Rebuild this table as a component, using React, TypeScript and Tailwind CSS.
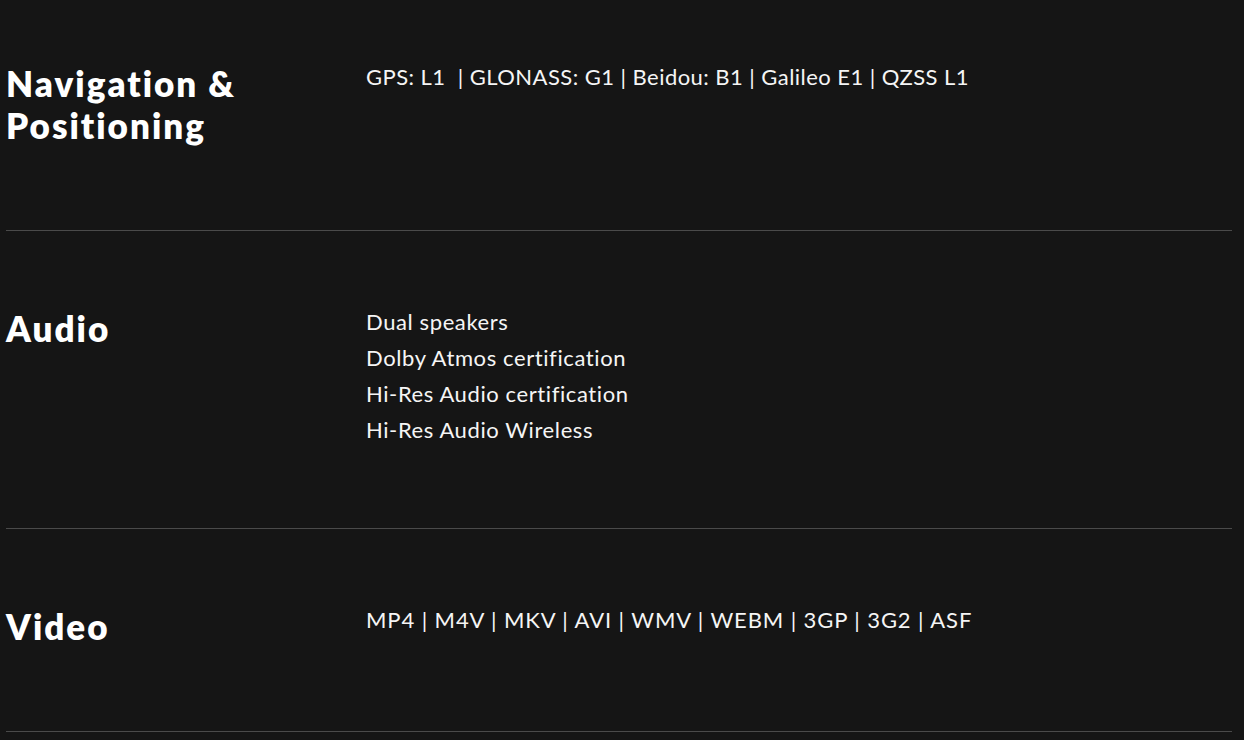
export default function App() {
  const font = { fontFamily: '"Lato", "Noto Sans", sans-serif' };

  return (
    <div className="min-h-screen bg-[#151515] text-white" style={font}>
      <div className="px-[6px] w-[1238px]">
        <section className="grid grid-cols-[360px_1fr] border-b border-[#4a4a4a] pt-[59px] pb-[84px]">
          <h2 className="mt-[3px] text-[35px] font-extrabold leading-[42px] tracking-[2px]">
            Navigation &amp;
            <br />
            Positioning
          </h2>
          <p className="whitespace-pre text-[22px] leading-[36px] tracking-[0.45px] text-[#f5f5f5]">
            {"GPS: L1  | GLONASS: G1 | Beidou: B1 | Galileo E1 | QZSS L1"}
          </p>
        </section>

        <section className="grid grid-cols-[360px_1fr] border-b border-[#4a4a4a] pt-[73px] pb-[80px]">
          <h2 className="mt-[3px] text-[35px] font-extrabold leading-[42px] tracking-[2px]">Audio</h2>
          <div className="text-[22px] leading-[36px] tracking-[0.6px] text-[#f5f5f5]">
            <p>Dual speakers</p>
            <p>Dolby Atmos certification</p>
            <p>Hi-Res Audio certification</p>
            <p>Hi-Res Audio Wireless</p>
          </div>
        </section>

        <section className="grid grid-cols-[360px_1fr] border-b border-[#4a4a4a] pt-[73px] pb-[84px]">
          <h2 className="mt-[3px] text-[35px] font-extrabold leading-[42px] tracking-[2px]">Video</h2>
          <p className="text-[22px] leading-[36px] tracking-[0.9px] text-[#f5f5f5]">
            MP4 | M4V | MKV | AVI | WMV | WEBM | 3GP | 3G2 | ASF
          </p>
        </section>
      </div>
    </div>
  );
}
